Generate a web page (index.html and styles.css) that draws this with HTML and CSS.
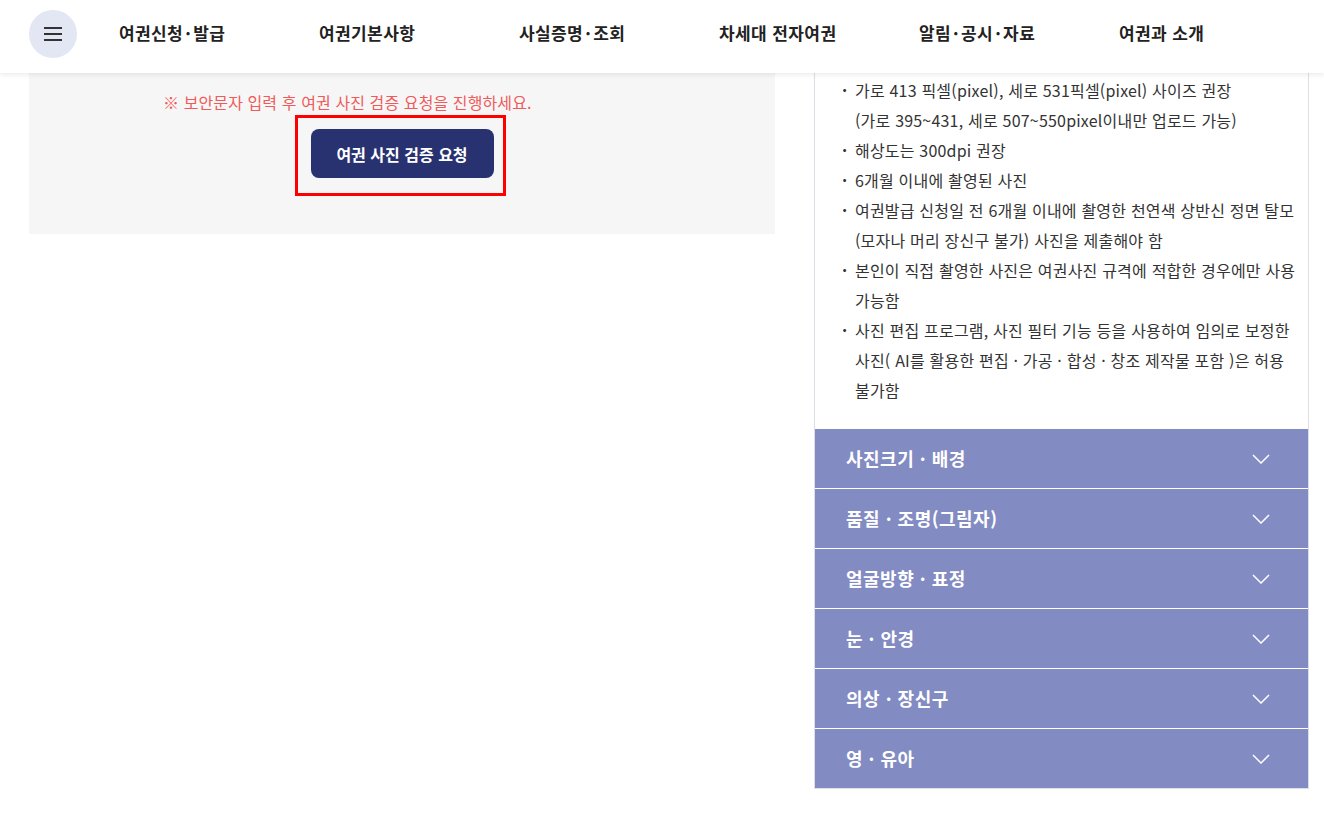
FILE: index.html
```html
<!DOCTYPE html>
<html lang="ko">
<head>
  <meta charset="utf-8">
  <link rel="stylesheet" href="styles.css">
</head>
<body>

  <header class="gnb">
    <button class="menu-btn" aria-label="전체메뉴">
      <svg width="20" height="16" viewBox="0 0 20 16"><path d="M1 2h18M1 8h18M1 14h18" stroke="#333" stroke-width="1.8" fill="none"/></svg>
    </button>
    <nav class="gnb-list">
      <a href="#">여권신청<span class="dot">·</span>발급</a>
      <a href="#">여권기본사항</a>
      <a href="#">사실증명<span class="dot">·</span>조회</a>
      <a href="#">차세대 전자여권</a>
      <a href="#">알림<span class="dot">·</span>공시<span class="dot">·</span>자료</a>
      <a href="#">여권과 소개</a>
    </nav>
  </header>

  <div class="content">
    <section class="left-col">
      <div class="verify-box">
        <p class="warn">※ 보안문자 입력 후 여권 사진 검증 요청을 진행하세요.</p>
        <div class="btn-wrap">
          <button class="btn-verify">여권 사진 검증 요청</button>
          <span class="highlight"></span>
        </div>
      </div>
    </section>

    <aside class="guide">
      <ul class="guide-list">
        <li>가로 413 픽셀(pixel), 세로 531픽셀(pixel) 사이즈 권장<br>(가로 395~431, 세로 507~550pixel이내만 업로드 가능)</li>
        <li>해상도는 300dpi 권장</li>
        <li>6개월 이내에 촬영된 사진</li>
        <li>여권발급 신청일 전 6개월 이내에 촬영한 천연색 상반신 정면 탈모<br>(모자나 머리 장신구 불가) 사진을 제출해야 함</li>
        <li>본인이 직접 촬영한 사진은 여권사진 규격에 적합한 경우에만 사용<br>가능함</li>
        <li>사진 편집 프로그램, 사진 필터 기능 등을 사용하여 임의로 보정한<br>사진( AI를 활용한 편집 · 가공 · 합성 · 창조 제작물 포함 )은 허용<br>불가함</li>
      </ul>

      <div class="accordion">
        <div class="acc-item">사진크기 · 배경<svg class="chev" width="18" height="10" viewBox="0 0 18 10"><path d="M1 1l8 8 8-8" stroke="#fff" stroke-width="1.5" fill="none"/></svg></div>
        <div class="acc-item">품질 · 조명(그림자)<svg class="chev" width="18" height="10" viewBox="0 0 18 10"><path d="M1 1l8 8 8-8" stroke="#fff" stroke-width="1.5" fill="none"/></svg></div>
        <div class="acc-item">얼굴방향 · 표정<svg class="chev" width="18" height="10" viewBox="0 0 18 10"><path d="M1 1l8 8 8-8" stroke="#fff" stroke-width="1.5" fill="none"/></svg></div>
        <div class="acc-item">눈 · 안경<svg class="chev" width="18" height="10" viewBox="0 0 18 10"><path d="M1 1l8 8 8-8" stroke="#fff" stroke-width="1.5" fill="none"/></svg></div>
        <div class="acc-item">의상 · 장신구<svg class="chev" width="18" height="10" viewBox="0 0 18 10"><path d="M1 1l8 8 8-8" stroke="#fff" stroke-width="1.5" fill="none"/></svg></div>
        <div class="acc-item">영 · 유아<svg class="chev" width="18" height="10" viewBox="0 0 18 10"><path d="M1 1l8 8 8-8" stroke="#fff" stroke-width="1.5" fill="none"/></svg></div>
      </div>
    </aside>
  </div>

</body>
</html>
```

FILE: styles.css
```css
body {
  margin: 0;
  background-color: white;
  font-family: "Noto Sans CJK KR", "Noto Sans", sans-serif;
  color: #333;
}

/* header */
.gnb {
  position: relative;
  z-index: 2;
  height: 73px;
  display: flex;
  align-items: center;
  padding-left: 29px;
  background: #fff;
  box-shadow: 0 2px 5px rgba(0, 0, 0, 0.08);
}

.menu-btn {
  width: 48px;
  height: 48px;
  border: 0;
  border-radius: 50%;
  background-color: #e3e6f3;
  display: flex;
  align-items: center;
  justify-content: center;
  padding: 0;
  margin-top: -5px;
}

.gnb-list {
  display: flex;
  margin-left: 42px;
  margin-top: -8px;
}

.gnb-list a {
  width: 200px;
  font-size: 17px;
  font-weight: 700;
  letter-spacing: 0.4px;
  color: #222;
  text-decoration: none;
}

.gnb-list .dot { margin: 0 2px;}

/* content */
.content {
  display: flex;
  gap: 39px;
  padding-left: 29px;
}

.left-col { width: 746px;}

.verify-box {
  background-color: #f6f6f6;
  padding: 17px 0 56px;
}

.warn {
  margin: 0 0 15px 134px;
  font-size: 16px;
  line-height: 24px;
  letter-spacing: 0.1px;
  color: #f05a5a;
}

.btn-wrap {
  position: relative;
  width: 183px;
  margin: 0 auto;
}

.btn-verify {
  display: block;
  width: 183px;
  height: 49px;
  border: 0;
  border-radius: 8px;
  background-color: #283270;
  color: #fff;
  font-family: inherit;
  font-size: 16px;
  font-weight: 700;
}

/* red annotation box */
.highlight {
  position: absolute;
  left: -16px;
  top: -14px;
  width: 205px;
  height: 75px;
  border: 3px solid #f00;
}

/* right guide */
.guide {
  width: 493px;
  border: 1px solid #dcdfe6;
  border-top: 0;
}

.guide-list {
  list-style: none;
  margin: 0;
  padding: 2px 0 24px 40px;
}

.guide-list li {
  position: relative;
  font-size: 16px;
  line-height: 30px;
  letter-spacing: 0.2px;
  white-space: nowrap;
  color: #333;
}

.guide-list li:before {
  content: "·";
  position: absolute;
  left: -13px;
  font-weight: 700;
}

.acc-item {
  height: 57px;
  display: flex;
  align-items: center;
  justify-content: space-between;
  padding: 0 38px 2px 31px;
  background-color: #828bc2;
  border-bottom: 1px solid #fff;
  color: #fff;
  font-size: 18px;
  font-weight: 700;
  letter-spacing: 0.5px;
}

.acc-item .chev { margin-top: 2px;}

.acc-item:last-child { border-bottom: 0;}
```
